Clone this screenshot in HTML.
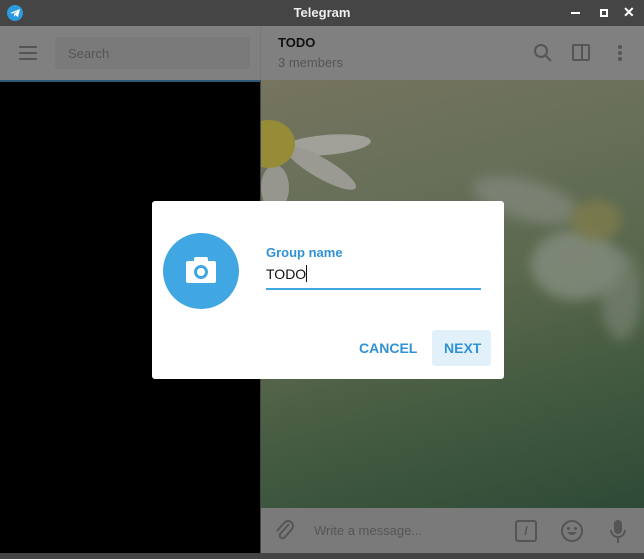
<!DOCTYPE html>
<html><head><style>
*{margin:0;padding:0;box-sizing:border-box}
body{width:644px;height:559px;position:relative;overflow:hidden;font-family:"Liberation Sans",sans-serif;background:#454545}
.abs{position:absolute}
</style></head><body>
<div class="abs" style="left:0;top:0;width:644px;height:26px;background:#454545"></div>
<div class="abs" style="left:7px;top:5px;width:16px;height:16px;border-radius:50%;background:#2b9be0"></div>
<svg class="abs" style="left:9px;top:8px" width="12" height="10" viewBox="0 0 12 10"><path d="M1 5 L11 1 L9 9 L6 7 L5 9 L5 6 L9 2.5 L4 5.5Z" fill="#fff"/></svg>
<div class="abs" style="left:0;width:644px;top:5px;text-align:center;color:#eee;font-weight:bold;font-size:13px">Telegram</div>
<div class="abs" style="left:571px;top:12px;width:9px;height:2px;background:#fff"></div>
<div class="abs" style="left:600px;top:9px;width:8px;height:8px;border:2px solid #fff"></div>
<div class="abs" style="left:623px;top:4px;color:#fff;font-size:14px;font-weight:bold">✕</div>
<div class="abs" style="left:0;top:26px;width:644px;height:54px;background:#808080"></div>
<div class="abs" style="left:260px;top:26px;width:1px;height:54px;background:#777"></div>
<div class="abs" style="left:19px;top:46px;width:18px;height:2px;background:#555;box-shadow:0 6px 0 #555,0 12px 0 #555"></div>
<div class="abs" style="left:55px;top:37px;width:195px;height:32px;background:#7a7a7a;border-radius:3px;color:#555;font-size:13px;padding:9px 13px">Search</div>
<div class="abs" style="left:278px;top:35px;font-size:13px;font-weight:bold;color:#111">TODO</div>
<div class="abs" style="left:278px;top:55px;font-size:13px;color:#555">3 members</div>
<svg class="abs" style="left:533px;top:43px" width="20" height="20"><circle cx="8" cy="8" r="6" stroke="#555" stroke-width="2" fill="none"/><path d="M12 12 L18 18" stroke="#555" stroke-width="2"/></svg>
<div class="abs" style="left:572px;top:44px;width:18px;height:17px;border:2px solid #555;border-radius:2px"></div>
<div class="abs" style="left:581px;top:44px;width:2px;height:17px;background:#555"></div>
<div class="abs" style="left:618px;top:45px;width:4px;height:4px;border-radius:50%;background:#555;box-shadow:0 6px 0 #555,0 12px 0 #555"></div>
<div class="abs" style="left:0;top:80px;width:260px;height:2px;background:#2e5a78"></div>
<div class="abs" style="left:0;top:82px;width:260px;height:471px;background:#000"></div>
<div class="abs" style="left:261px;top:80px;width:383px;height:428px;background:linear-gradient(165deg,#76745e 0%,#68705a 25%,#5a684d 50%,#41593f 75%,#2e4a37 100%);overflow:hidden">
<div class="abs" style="left:20px;top:55px;width:90px;height:20px;border-radius:50%;background:#a0a098;transform:rotate(-5deg)"></div>
<div class="abs" style="left:20px;top:78px;width:80px;height:20px;border-radius:50%;background:#9a9a92;transform:rotate(30deg)"></div>
<div class="abs" style="left:0px;top:85px;width:28px;height:45px;border-radius:50%;background:#96968e"></div>
<div class="abs" style="left:-18px;top:40px;width:52px;height:48px;border-radius:50%;background:#968c38"></div>
<div class="abs" style="left:210px;top:100px;width:110px;height:40px;border-radius:50%;background:#848a7e;opacity:.7;filter:blur(6px);transform:rotate(15deg)"></div>
<div class="abs" style="left:270px;top:150px;width:90px;height:70px;border-radius:50%;background:#868e80;opacity:.8;filter:blur(6px)"></div>
<div class="abs" style="left:310px;top:120px;width:50px;height:40px;border-radius:50%;background:#7e7c4c;opacity:.8;filter:blur(5px)"></div>
<div class="abs" style="left:340px;top:170px;width:40px;height:90px;border-radius:50%;background:#80887a;opacity:.6;filter:blur(6px)"></div>
</div>
<div class="abs" style="left:261px;top:508px;width:383px;height:45px;background:#7a7a7a"></div>
<div class="abs" style="left:314px;top:523px;font-size:13px;color:#555">Write a message...</div>
<svg class="abs" style="left:273px;top:518px" width="24" height="26"><path d="M16 6 L7 16 a3 3 0 0 0 4 4 L19 11 a5 5 0 0 0 -7 -7 L4 13" stroke="#555" stroke-width="2" fill="none"/></svg>
<div class="abs" style="left:515px;top:520px;width:22px;height:22px;border:2px solid #555;border-radius:3px;color:#555;font-size:12px;font-weight:bold;text-align:center;line-height:18px">/</div>
<svg class="abs" style="left:560px;top:519px" width="24" height="24"><circle cx="12" cy="12" r="10" stroke="#555" stroke-width="2" fill="none"/><circle cx="8.5" cy="9.5" r="1.5" fill="#555"/><circle cx="15.5" cy="9.5" r="1.5" fill="#555"/><path d="M7 13 Q12 19 17 13Z" fill="#555"/></svg>
<svg class="abs" style="left:608px;top:518px" width="20" height="26"><rect x="6" y="2" width="8" height="14" rx="4" fill="#555"/><path d="M3 12 a7 7 0 0 0 14 0 M10 19 V25" stroke="#555" stroke-width="2" fill="none"/></svg>
<div class="abs" style="left:152px;top:201px;width:352px;height:178px;background:#fff;border-radius:3px"></div>
<div class="abs" style="left:163px;top:233px;width:76px;height:76px;border-radius:50%;background:#40a7e3"></div>
<div class="abs" style="left:186px;top:261px;width:30px;height:22px;background:#fff;border-radius:2px"></div>
<div class="abs" style="left:194px;top:257px;width:14px;height:6px;background:#fff;border-radius:2px"></div>
<div class="abs" style="left:194px;top:265px;width:14px;height:14px;border-radius:50%;border:3px solid #40a7e3"></div>
<div class="abs" style="left:266px;top:245px;font-size:13px;color:#3192d3;font-weight:bold">Group name</div>
<div class="abs" style="left:266px;top:265px;font-size:14px;color:#111">TODO<span style="display:inline-block;width:1px;height:17px;background:#111;vertical-align:-3px"></span></div>
<div class="abs" style="left:266px;top:288px;width:215px;height:2px;background:#40a7e3"></div>
<div class="abs" style="left:359px;top:340px;font-size:14px;font-weight:bold;color:#3192d3">CANCEL</div>
<div class="abs" style="left:432px;top:330px;width:59px;height:36px;background:#e2f0fa;border-radius:3px"></div>
<div class="abs" style="left:444px;top:340px;font-size:14px;font-weight:bold;color:#3192d3">NEXT</div>
</body></html>
